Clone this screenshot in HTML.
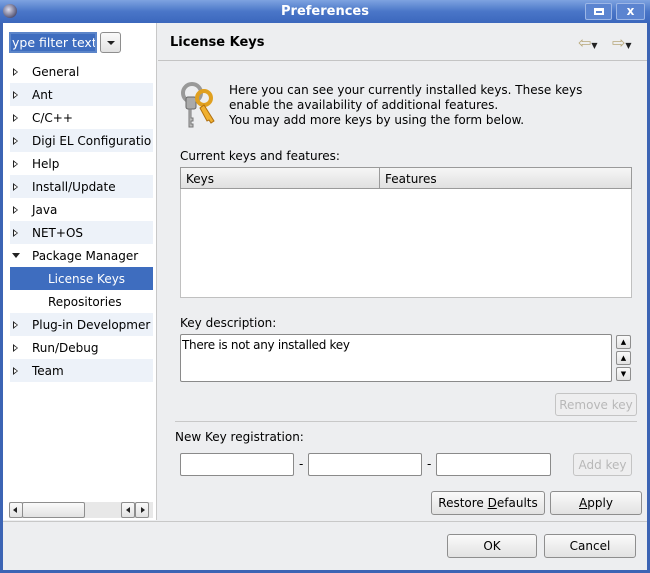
<!DOCTYPE html>
<html><head><style>
*{margin:0;padding:0;box-sizing:border-box}
body{width:650px;height:573px;overflow:hidden;font-family:"DejaVu Sans","Liberation Sans",sans-serif;font-size:12px;color:#000;background:#3c64b4;position:relative}
.a{position:absolute}
#title{left:0;top:0;width:650px;height:23px;background:linear-gradient(#7ea3e0,#4a76c8 50%,#3b67bd);color:#fff;font-weight:bold;font-size:13px;text-align:center;line-height:24px}
#win{left:3px;top:23px;width:644px;height:547px;background:#edeef0}
#left{left:3px;top:23px;width:154px;height:497px;background:#fff;border-right:1px solid #c8c8c8}
.row{position:absolute;left:10px;width:143px;height:23px;line-height:24px;padding-left:22px}
.row.s{background:#edf2f9}
.row.sel{background:#3e6dbf;color:#fff}
.tri{position:absolute;left:3px;top:8px;width:0;height:0;border-left:5px solid #222;border-top:4px solid transparent;border-bottom:4px solid transparent}
.tri:after{content:"";position:absolute;left:-4px;top:-2px;border-left:3px solid #fff;border-top:2px solid transparent;border-bottom:2px solid transparent}
.btn{position:absolute;background:linear-gradient(#fafafa,#e2e2e2);border:1px solid #8e8e8e;border-radius:3px;text-align:center;font-size:12px}
.dis{color:#b8b8b8;border-color:#c4c4c4;background:#eeeeef}
.inp{position:absolute;background:#fff;border:1px solid #8a8a8a;border-radius:2px}
</style></head><body>
<div id="title" class="a">Preferences</div>
<div class="a" style="left:3px;top:4px;width:14px;height:14px;border-radius:7px;background:radial-gradient(circle at 40% 40%,#dde,#446 80%)"></div>
<div class="a" style="left:585px;top:3px;width:27px;height:17px;border:1px solid #9cb6e6;border-radius:2px;background:#5b84d0"><div class="a" style="left:8px;top:4px;width:10px;height:7px;border:2px solid #fff;border-top-width:3px"></div></div>
<div class="a" style="left:616px;top:3px;width:29px;height:17px;border:1px solid #9cb6e6;border-radius:2px;background:#5b84d0;color:#fff;font-weight:bold;text-align:center;line-height:15px">x</div>
<div id="win" class="a"></div>
<div id="left" class="a"></div>
<div class="a" style="left:9px;top:32px;width:88px;height:21px;border:2px solid #5b85c9;background:#3e6dbf;color:#fff;line-height:18px;padding-left:1px;font-size:12.5px;overflow:hidden;white-space:nowrap">ype filter text</div>
<div class="btn" style="left:100px;top:32px;width:21px;height:21px"><div class="a" style="left:6px;top:8px;border-top:4px solid #222;border-left:4px solid transparent;border-right:4px solid transparent"></div></div>

<div class="row" style="top:60px"><i class="tri"></i>General</div>
<div class="row s" style="top:83px"><i class="tri"></i>Ant</div>
<div class="row" style="top:106px"><i class="tri"></i>C/C++</div>
<div class="row s" style="top:129px;overflow:hidden;white-space:nowrap"><i class="tri"></i>Digi EL Configuratio</div>
<div class="row" style="top:152px"><i class="tri"></i>Help</div>
<div class="row s" style="top:175px"><i class="tri"></i>Install/Update</div>
<div class="row" style="top:198px"><i class="tri"></i>Java</div>
<div class="row s" style="top:221px"><i class="tri"></i>NET+OS</div>
<div class="row" style="top:244px"><i class="a" style="left:2px;top:9px;border-top:5px solid #222;border-left:4px solid transparent;border-right:4px solid transparent"></i>Package Manager</div>
<div class="row sel" style="top:267px;padding-left:38px">License Keys</div>
<div class="row" style="top:290px;padding-left:38px">Repositories</div>
<div class="row s" style="top:313px;overflow:hidden;white-space:nowrap"><i class="tri"></i>Plug-in Developmer</div>
<div class="row" style="top:336px"><i class="tri"></i>Run/Debug</div>
<div class="row s" style="top:359px"><i class="tri"></i>Team</div>

<div class="a" style="left:9px;top:502px;width:144px;height:16px;background:#e8e8e8"></div>
<div class="btn" style="left:9px;top:502px;width:14px;height:16px;border-radius:2px"><i class="a" style="left:3px;top:4px;border-right:4px solid #222;border-top:3px solid transparent;border-bottom:3px solid transparent"></i></div>
<div class="btn" style="left:22px;top:502px;width:63px;height:16px;border-radius:2px"></div>
<div class="btn" style="left:121px;top:502px;width:14px;height:16px;border-radius:2px"><i class="a" style="left:4px;top:4px;border-right:4px solid #222;border-top:3px solid transparent;border-bottom:3px solid transparent"></i></div>
<div class="btn" style="left:135px;top:502px;width:14px;height:16px;border-radius:2px"><i class="a" style="left:5px;top:4px;border-left:4px solid #222;border-top:3px solid transparent;border-bottom:3px solid transparent"></i></div>

<div class="a" style="left:170px;top:35px;font-weight:bold;font-size:13px">License Keys</div>
<div class="a" style="left:578px;top:33px;color:#b8a87a;font-size:16px">⇦<span style="font-size:8px;color:#222">▼</span></div>
<div class="a" style="left:612px;top:33px;color:#b8a87a;font-size:16px">⇨<span style="font-size:8px;color:#222">▼</span></div>
<div class="a" style="left:158px;top:60px;width:489px;height:1px;background:#c4c4c4"></div>

<svg class="a" style="left:178px;top:81px" width="44" height="50" viewBox="0 0 44 50">
<circle cx="14" cy="12" r="9" fill="none" stroke="#999" stroke-width="4"/>
<rect x="8" y="16" width="10" height="12" rx="2" fill="#aaa" stroke="#666"/>
<path d="M11 28 V46 h4 v-3 h-2 v-3 h2 v-3 h-2 V28z" fill="#bbb" stroke="#777"/>
<circle cx="26" cy="17" r="7" fill="none" stroke="#e0a020" stroke-width="4"/>
<path d="M26 24 L36 40 l-3 2 l-2 -3 l-2 1 l-7 -13z" fill="#f0b030" stroke="#b07010"/>
</svg>
<div class="a" style="left:229px;top:83px;line-height:15px">Here you can see your currently installed keys. These keys<br>enable the availability of additional features.<br>You may add more keys by using the form below.</div>

<div class="a" style="left:180px;top:149px">Current keys and features:</div>
<div class="a" style="left:180px;top:167px;width:452px;height:131px;background:#fff;border:1px solid #c0c0c0"></div>
<div class="a" style="left:180px;top:167px;width:452px;height:22px;background:linear-gradient(#f6f6f6,#e0e0e0);border:1px solid #9a9a9a"></div>
<div class="a" style="left:379px;top:167px;width:1px;height:22px;background:#9a9a9a"></div>
<div class="a" style="left:186px;top:172px">Keys</div>
<div class="a" style="left:385px;top:172px">Features</div>

<div class="a" style="left:180px;top:316px">Key description:</div>
<div class="inp" style="left:180px;top:334px;width:432px;height:48px;padding:3px 1px;letter-spacing:-0.3px">There is not any installed key</div>
<div class="btn" style="left:616px;top:335px;width:15px;height:14px;border-radius:2px;font-size:7px;line-height:12px">▲</div>
<div class="btn" style="left:616px;top:351px;width:15px;height:14px;border-radius:2px;font-size:7px;line-height:12px">▲</div>
<div class="btn" style="left:616px;top:367px;width:15px;height:14px;border-radius:2px;font-size:7px;line-height:12px">▼</div>
<div class="btn dis" style="left:555px;top:393px;width:82px;height:23px;line-height:22px">Remove key</div>
<div class="a" style="left:175px;top:421px;width:462px;height:1px;background:#c8c8c8"></div>
<div class="a" style="left:175px;top:430px">New Key registration:</div>
<div class="inp" style="left:180px;top:453px;width:114px;height:23px"></div>
<div class="a" style="left:299px;top:457px">-</div>
<div class="inp" style="left:308px;top:453px;width:114px;height:23px"></div>
<div class="a" style="left:427px;top:457px">-</div>
<div class="inp" style="left:436px;top:453px;width:115px;height:23px"></div>
<div class="btn dis" style="left:573px;top:453px;width:59px;height:23px;line-height:22px">Add key</div>
<div class="btn" style="left:431px;top:491px;width:114px;height:24px;line-height:23px">Restore <u>D</u>efaults</div>
<div class="btn" style="left:550px;top:491px;width:92px;height:24px;line-height:23px"><u>A</u>pply</div>
<div class="a" style="left:3px;top:521px;width:644px;height:1px;background:#c8c8c8"></div>
<div class="btn" style="left:447px;top:534px;width:90px;height:24px;line-height:23px">OK</div>
<div class="btn" style="left:544px;top:534px;width:92px;height:24px;line-height:23px">Cancel</div>
</body></html>
